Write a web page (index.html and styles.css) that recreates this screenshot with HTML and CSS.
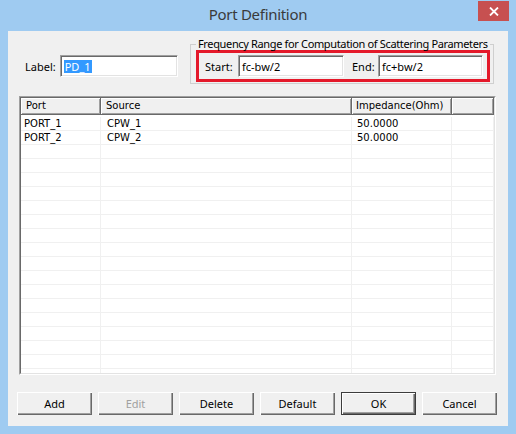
FILE: index.html
```html
<!DOCTYPE html>
<html lang="en">
<head>
    <meta charset="UTF-8">
    <title>Port Definition</title>
    <link rel="stylesheet" href="styles.css">
</head>
<body>
    <div class="window">
        <div class="titlebar">
            <span></span>
            <div class="title">Port Definition</div>
            <div class="close">
                <svg width="10" height="9" viewBox="0 0 10 9">
                    <path d="M1 0.5 L9 8.5 M9 0.5 L1 8.5" stroke="#fff" stroke-width="1.8" fill="none"/>
                </svg>
            </div>
        </div>

        <div class="client">
            <div class="top">
                <div class="label-field">
                    <label>Label:</label>
                    <div class="edit label-edit"><span class="sel">PD_1</span></div>
                </div>
                <fieldset class="group">
                    <legend>Frequency Range for Computation of Scattering Parameters</legend>
                    <div class="highlight">
                        <label class="start-label">Start:</label>
                        <div class="edit start-edit">fc-bw/2</div>
                        <label class="end-label">End:</label>
                        <div class="edit end-edit">fc+bw/2</div>
                    </div>
                </fieldset>
            </div>

            <div class="list">
                <div class="list-inner">
                    <div class="list-header">
                        <div class="hcell col-port">Port</div>
                        <div class="hcell col-source">Source</div>
                        <div class="hcell col-imp">Impedance(Ohm)</div>
                        <div class="hcell col-rest"></div>
                    </div>
                    <div class="rows">
                        <div class="row"><div class="cell col-port">PORT_1</div><div class="cell col-source">CPW_1</div><div class="cell col-imp">50.0000</div><div class="cell col-rest"></div></div>
                        <div class="row"><div class="cell col-port">PORT_2</div><div class="cell col-source">CPW_2</div><div class="cell col-imp">50.0000</div><div class="cell col-rest"></div></div>
                        <div class="row"><div class="cell col-port"></div><div class="cell col-source"></div><div class="cell col-imp"></div><div class="cell col-rest"></div></div>
                        <div class="row"><div class="cell col-port"></div><div class="cell col-source"></div><div class="cell col-imp"></div><div class="cell col-rest"></div></div>
                        <div class="row"><div class="cell col-port"></div><div class="cell col-source"></div><div class="cell col-imp"></div><div class="cell col-rest"></div></div>
                        <div class="row"><div class="cell col-port"></div><div class="cell col-source"></div><div class="cell col-imp"></div><div class="cell col-rest"></div></div>
                        <div class="row"><div class="cell col-port"></div><div class="cell col-source"></div><div class="cell col-imp"></div><div class="cell col-rest"></div></div>
                        <div class="row"><div class="cell col-port"></div><div class="cell col-source"></div><div class="cell col-imp"></div><div class="cell col-rest"></div></div>
                        <div class="row"><div class="cell col-port"></div><div class="cell col-source"></div><div class="cell col-imp"></div><div class="cell col-rest"></div></div>
                        <div class="row"><div class="cell col-port"></div><div class="cell col-source"></div><div class="cell col-imp"></div><div class="cell col-rest"></div></div>
                        <div class="row"><div class="cell col-port"></div><div class="cell col-source"></div><div class="cell col-imp"></div><div class="cell col-rest"></div></div>
                        <div class="row"><div class="cell col-port"></div><div class="cell col-source"></div><div class="cell col-imp"></div><div class="cell col-rest"></div></div>
                        <div class="row"><div class="cell col-port"></div><div class="cell col-source"></div><div class="cell col-imp"></div><div class="cell col-rest"></div></div>
                        <div class="row"><div class="cell col-port"></div><div class="cell col-source"></div><div class="cell col-imp"></div><div class="cell col-rest"></div></div>
                        <div class="row"><div class="cell col-port"></div><div class="cell col-source"></div><div class="cell col-imp"></div><div class="cell col-rest"></div></div>
                        <div class="row"><div class="cell col-port"></div><div class="cell col-source"></div><div class="cell col-imp"></div><div class="cell col-rest"></div></div>
                        <div class="row"><div class="cell col-port"></div><div class="cell col-source"></div><div class="cell col-imp"></div><div class="cell col-rest"></div></div>
                        <div class="row"><div class="cell col-port"></div><div class="cell col-source"></div><div class="cell col-imp"></div><div class="cell col-rest"></div></div>
                        <div class="row"><div class="cell col-port"></div><div class="cell col-source"></div><div class="cell col-imp"></div><div class="cell col-rest"></div></div>
                    </div>
                </div>
            </div>

            <div class="buttons">
                <button class="btn">Add</button>
                <button class="btn" disabled>Edit</button>
                <button class="btn">Delete</button>
                <button class="btn">Default</button>
                <button class="btn btn-default">OK</button>
                <button class="btn">Cancel</button>
            </div>
        </div>
    </div>
</body>
</html>
```

FILE: styles.css
```css
body {
    margin: 0;
    font-family: "Noto Sans", sans-serif;
    font-size: 11px;
    color: #000;
}
.window {
    width: 516px;
    height: 434px;
    box-sizing: border-box;
    background: #9fcbf1;
    padding: 0 8px;
}
.titlebar {
    height: 31px;
    display: grid;
    grid-template-columns: 1fr auto 1fr;
    align-items: center;
}
.title {
    font-size: 15px;
    letter-spacing: -0.3px;
    color: #3a3a3a;
    padding-bottom: 3px;
}
.close {
    justify-self: end;
    align-self: start;
    margin-top: 1px;
    margin-right: -1px;
    width: 31px;
    height: 20px;
    background: #c75050;
    display: flex;
    align-items: center;
    justify-content: center;
}
.client {
    height: 395px;
    background: #f0f0f0;
    display: flex;
    flex-direction: column;
}
.top {
    display: flex;
    align-items: flex-start;
    padding: 6px 14px 0 17px;
    height: 47px;
}
.label-field {
    display: flex;
    align-items: center;
    margin-top: 18px;
}
.label-field label {
    margin-right: 4px;
}
.edit {
    box-sizing: border-box;
    height: 22px;
    background: #fff;
    border: 1px solid;
    border-color: #a0a0a0 #fff #fff #a0a0a0;
    box-shadow: inset 1px 1px #696969, inset -1px -1px #e3e3e3;
    padding-left: 3px;
    display: flex;
    align-items: center;
}
.label-edit {
    width: 118px;
}
.sel {
    background: #3399ff;
    color: #fff;
    padding: 0 1px;
    line-height: 13px;
}
.group {
    margin: 0 0 0 auto;
    padding: 0 3px 0 5px;
    width: 304px;
    height: 47px;
    box-sizing: border-box;
    border: 1px solid #cfcfcf;
    min-width: 0;
}
.group legend {
    padding: 0 2px;
    line-height: 14px;
    letter-spacing: -0.35px;
}
.highlight {
    margin-top: -1px;
    height: 32px;
    box-sizing: border-box;
    border: 3px solid #e4192a;
    padding: 0 4px 0 6px;
    display: flex;
    align-items: center;
}
.start-label {
    width: 33px;
}
.start-edit {
    width: 106px;
}
.end-label {
    width: 26px;
    margin-left: 8px;
}
.end-edit {
    width: 105px;
}
.list {
    margin: 12px 12px 0 11px;
    height: 279px;
    box-sizing: border-box;
    border: 1px solid;
    border-color: #a0a0a0 #fff #fff #a0a0a0;
}
.list-inner {
    height: 100%;
    box-sizing: border-box;
    border: 1px solid;
    border-color: #696969 #e3e3e3 #e3e3e3 #696969;
    background: #fff;
    overflow: hidden;
    font-family: "DejaVu Sans", sans-serif;
    font-size: 10px;
}
.list-header {
    display: flex;
    height: 17px;
}
.hcell {
    box-sizing: border-box;
    height: 17px;
    background: #f0f0f0;
    border-right: 1px solid #696969;
    border-bottom: 1px solid #696969;
    box-shadow: inset 1px 1px #fff, inset -1px -1px #a0a0a0;
    padding-left: 5px;
    line-height: 16px;
    white-space: nowrap;
}
.col-port { width: 80px; }
.col-source { width: 251px; }
.col-imp { width: 100px; }
.col-rest { flex: 1; }
.list-header .col-imp { padding-left: 4px; }
.rows {
    margin-top: 2px;
}
.row {
    display: flex;
    height: 14px;
}
.cell {
    box-sizing: border-box;
    height: 14px;
    border-right: 1px solid #f0f0f0;
    border-bottom: 1px solid #f0f0f0;
    line-height: 13px;
    padding-left: 6px;
    white-space: nowrap;
}
.row .col-port { padding-left: 3px; }
.row .col-imp { padding-left: 5px; }
.buttons {
    display: flex;
    gap: 6px;
    margin-top: 17px;
    padding-left: 9px;
}
.btn {
    width: 75px;
    height: 23px;
    box-sizing: border-box;
    margin: 0;
    padding: 0;
    border: none;
    background: #f0f0f0;
    box-shadow: inset 1px 1px #fff, inset -1px -1px #696969, inset -2px -2px #a0a0a0;
    font-family: "Noto Sans", sans-serif;
    font-size: 11px;
    color: #000;
}
.btn:disabled {
    color: #a0a0a0;
}
.btn-default {
    border: 1px solid #3c3c3c;
}
```
